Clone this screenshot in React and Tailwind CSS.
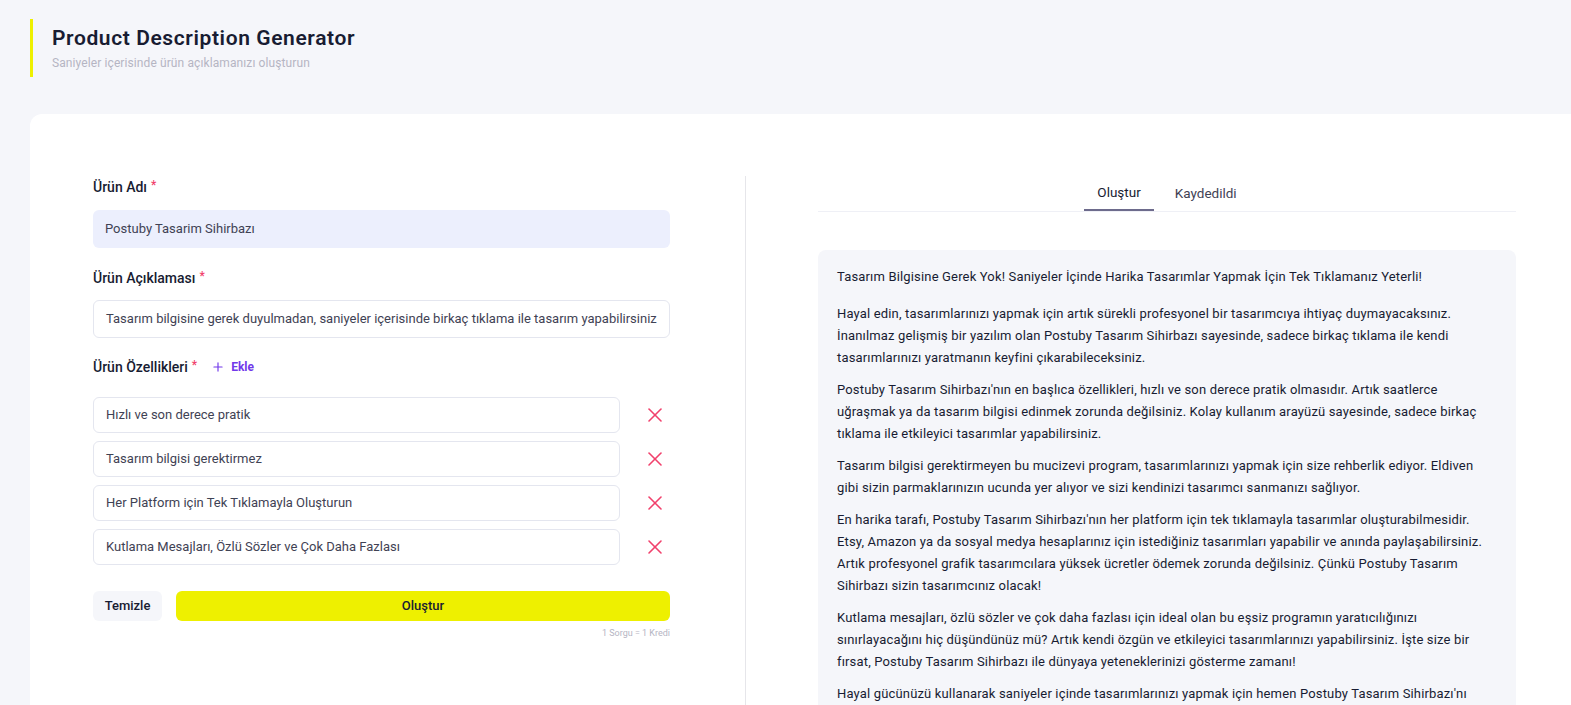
import { X, Plus } from 'lucide-react';

const features = [
  'Hızlı ve son derece pratik',
  'Tasarım bilgisi gerektirmez',
  'Her Platform için Tek Tıklamayla Oluşturun',
  'Kutlama Mesajları, Özlü Sözler ve Çok Daha Fazlası',
];

const paragraphs = [
  'Hayal edin, tasarımlarınızı yapmak için artık sürekli profesyonel bir tasarımcıya ihtiyaç duymayacaksınız. İnanılmaz gelişmiş bir yazılım olan Postuby Tasarım Sihirbazı sayesinde, sadece birkaç tıklama ile kendi tasarımlarınızı yaratmanın keyfini çıkarabileceksiniz.',
  "Postuby Tasarım Sihirbazı'nın en başlıca özellikleri, hızlı ve son derece pratik olmasıdır. Artık saatlerce uğraşmak ya da tasarım bilgisi edinmek zorunda değilsiniz. Kolay kullanım arayüzü sayesinde, sadece birkaç tıklama ile etkileyici tasarımlar yapabilirsiniz.",
  'Tasarım bilgisi gerektirmeyen bu mucizevi program, tasarımlarınızı yapmak için size rehberlik ediyor. Eldiven gibi sizin parmaklarınızın ucunda yer alıyor ve sizi kendinizi tasarımcı sanmanızı sağlıyor.',
  "En harika tarafı, Postuby Tasarım Sihirbazı'nın her platform için tek tıklamayla tasarımlar oluşturabilmesidir. Etsy, Amazon ya da sosyal medya hesaplarınız için istediğiniz tasarımları yapabilir ve anında paylaşabilirsiniz. Artık profesyonel grafik tasarımcılara yüksek ücretler ödemek zorunda değilsiniz. Çünkü Postuby Tasarım Sihirbazı sizin tasarımcınız olacak!",
  'Kutlama mesajları, özlü sözler ve çok daha fazlası için ideal olan bu eşsiz programın yaratıcılığınızı sınırlayacağını hiç düşündünüz mü? Artık kendi özgün ve etkileyici tasarımlarınızı yapabilirsiniz. İşte size bir fırsat, Postuby Tasarım Sihirbazı ile dünyaya yeteneklerinizi gösterme zamanı!',
  "Hayal gücünüzü kullanarak saniyeler içinde tasarımlarınızı yapmak için hemen Postuby Tasarım Sihirbazı'nı deneyin ve farkı kendiniz görün!",
];

function Label({ children }) {
  return (
    <div className="flex items-center h-5 text-[14px] font-medium text-[#181c32]">
      {children}
      <span className="text-[#f1416c] ml-1 self-start text-[12px] leading-[16px]">*</span>
    </div>
  );
}

export default function App() {
  return (
    <div className="min-h-screen bg-[#f5f6fa] font-['Roboto',sans-serif] overflow-hidden">
      {/* header */}
      <div className="pt-[19px] pl-[30px]">
        <div className="border-l-[3px] border-[#eef000] pl-[19px] h-[58px] flex flex-col justify-center">
          <h1 className="text-[21px] leading-[26px] font-semibold tracking-[0.6px] text-[#181c32]">Product Description Generator</h1>
          <p className="text-[12px] tracking-[0.1px] text-[#b5b5c3] mt-[3px]">Saniyeler içerisinde ürün açıklamanızı oluşturun</p>
        </div>
      </div>

      {/* card */}
      <div className="mt-[37px] ml-[30px] bg-white rounded-tl-xl min-h-[600px] pt-[62px] flex">
        {/* left */}
        <div className="w-[716px] shrink-0 pl-[63px] pr-[75px] border-r border-[#e6e6ea] pt-[1px]">
          <Label>Ürün Adı</Label>
          <div className="mt-[13px] h-[38px] rounded-md bg-[#eceffd] flex items-center px-3 text-[13px] text-[#3f4254]">
            Postuby Tasarim Sihirbazı
          </div>

          <div className="mt-[20px]">
            <Label>Ürün Açıklaması</Label>
          </div>
          <div className="mt-[12px] h-[38px] rounded-md border border-[#e4e6ef] flex items-center px-3 text-[13px] text-[#3f4254] whitespace-nowrap overflow-hidden">
            Tasarım bilgisine gerek duyulmadan, saniyeler içerisinde birkaç tıklama ile tasarım yapabilirsiniz
          </div>

          <div className="mt-[19px] flex items-center">
            <Label>Ürün Özellikleri</Label>
            <button className="ml-[14px] flex items-center gap-[6px] text-[12px] font-bold text-[#7239ea]">
              <Plus size={14} strokeWidth={2} />
              Ekle
            </button>
          </div>

          <div className="mt-[20px] flex flex-col gap-2">
            {features.map((f) => (
              <div key={f} className="flex items-center">
                <div className="w-[527px] h-[36px] rounded-md border border-[#e4e6ef] flex items-center px-3 text-[13px] text-[#3f4254]">
                  {f}
                </div>
                <button className="ml-[23px] text-[#f1416c]">
                  <X size={24} strokeWidth={1.6} />
                </button>
              </div>
            ))}
          </div>

          <div className="mt-[26px] flex gap-[14px]">
            <button className="w-[69px] h-[30px] rounded-md bg-[#f5f6fa] text-[13px] font-medium text-[#181c32]">Temizle</button>
            <button className="flex-1 h-[30px] rounded-md bg-[#eef000] text-[13px] font-medium text-[#181c32]">Oluştur</button>
          </div>
          <p className="mt-[6px] text-right text-[9px] text-[#b5b5c3]">1 Sorgu = 1 Kredi</p>
        </div>

        {/* right */}
        <div className="pl-[72px]">
          <div className="w-[698px]">
            <div className="flex justify-center gap-2 border-b border-[#eff0f6]">
              <button className="h-[35px] px-[13px] text-[13.5px] text-[#181c32] border-b-2 border-[#6d6b8c] -mb-px">Oluştur</button>
              <button className="h-[35px] px-[13px] text-[13.5px] text-[#3f4254]">Kaydedildi</button>
            </div>
            <div className="mt-[38px] bg-[#f5f6fa] rounded-lg pt-[16px] pl-[19px] pr-[19px] pb-6 text-[13px] leading-[22px] tracking-[0.16px] text-[#181c32]">
              <p className="mb-[15px]">Tasarım Bilgisine Gerek Yok! Saniyeler İçinde Harika Tasarımlar Yapmak İçin Tek Tıklamanız Yeterli!</p>
              {paragraphs.map((p, i) => (
                <p key={i} className="mb-[10px]">{p}</p>
              ))}
            </div>
          </div>
        </div>
      </div>
    </div>
  );
}
